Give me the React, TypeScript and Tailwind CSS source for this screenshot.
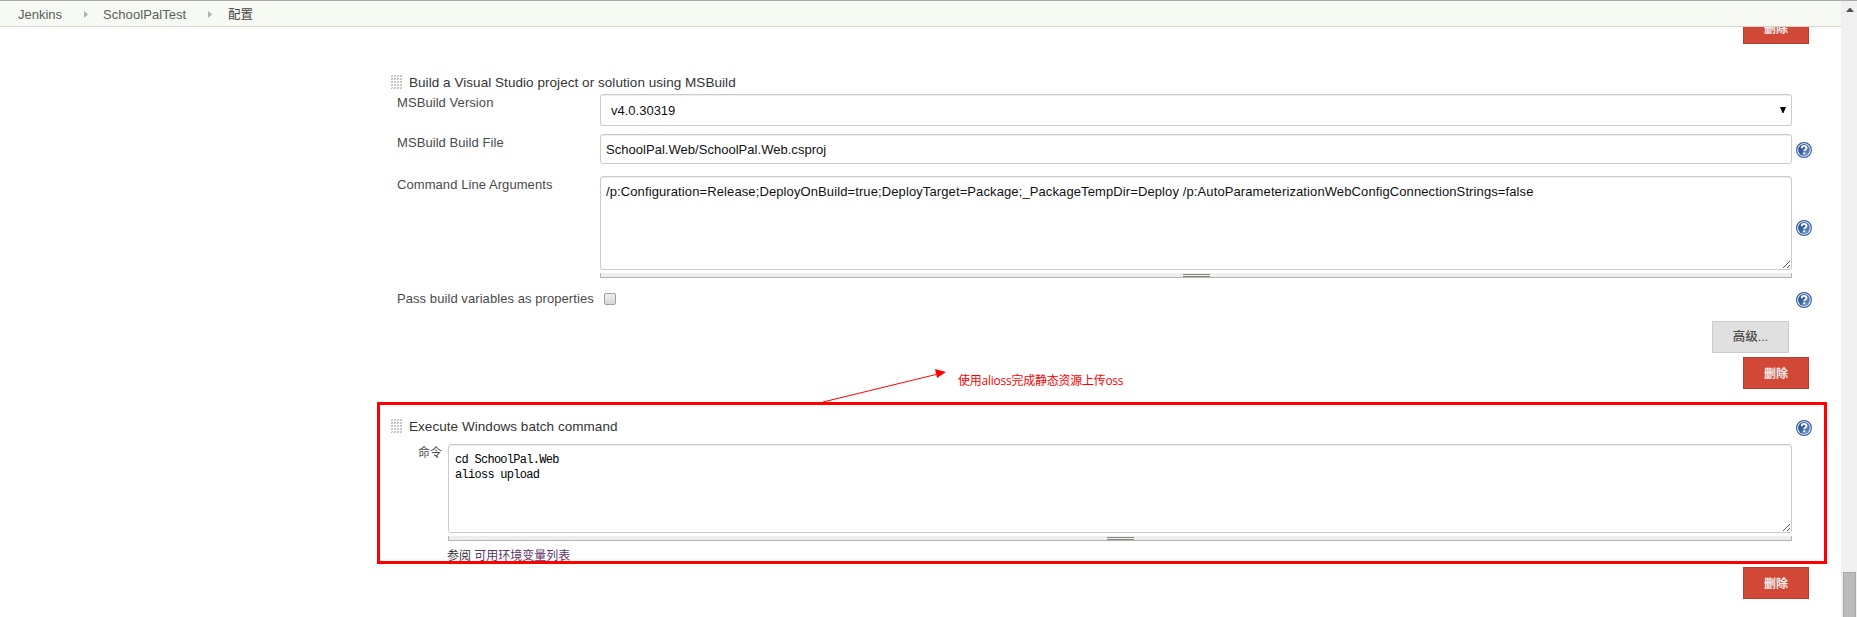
import React from "react";

const SANS = "font-['Liberation_Sans','Noto_Sans_CJK_SC',sans-serif]";

function HelpIcon() {
  return (
    <svg width="16" height="16" viewBox="0 0 16 16" className="block shrink-0">
      <defs>
        <linearGradient id="helpFill" x1="0" y1="0" x2="1" y2="1">
          <stop offset="0" stopColor="#1f4481" />
          <stop offset="0.5" stopColor="#3d66a6" />
          <stop offset="1" stopColor="#7ba3d6" />
        </linearGradient>
      </defs>
      <circle cx="8" cy="8" r="7.4" fill="#fff" stroke="#3a619f" strokeWidth="1.2" />
      <circle cx="8" cy="8" r="5.9" fill="url(#helpFill)" />
      <path d="M5.7 6.3C5.7 4.7 6.7 3.9 8.1 3.9c1.5 0 2.4.8 2.4 2 0 1.7-2.2 1.7-2.2 3.4" fill="none" stroke="#fff" strokeWidth="1.9" />
      <rect x="7.2" y="10.4" width="2.1" height="1.9" fill="#fff" />
    </svg>
  );
}

function Grip() {
  const cols = [0, 3, 6, 9];
  const rows = [0, 3, 6, 9, 12];
  return (
    <svg width="12" height="15" viewBox="0 0 12 15" className="block shrink-0" shapeRendering="crispEdges">
      {rows.map((y) =>
        cols.map((x) => (
          <g key={`${x}-${y}`}>
            <rect x={x} y={y} width="2" height="2" fill="#dedede" />
            <rect x={x + 1} y={y} width="1" height="1" fill="#b4b4b4" />
            <rect x={x} y={y + 1} width="1" height="1" fill="#b4b4b4" />
          </g>
        )),
      )}
    </svg>
  );
}

function Crumb() {
  return (
    <svg width="4" height="7" viewBox="0 0 4 7" className="mt-px block shrink-0">
      <path d="M0 0L4 3.5L0 7Z" fill="#b0b0b0" />
    </svg>
  );
}

function ResizeCorner() {
  return (
    <svg width="7" height="7" viewBox="0 0 7 7" className="absolute right-[1px] bottom-[1px]" shapeRendering="crispEdges">
      {[0, 1, 2, 3, 4, 5, 6].map((i) => (
        <rect key={i} x={i} y={6 - i} width="1" height="1" fill="#555" />
      ))}
      {[0, 1, 2].map((i) => (
        <rect key={i} x={4 + i} y={6 - i} width="1" height="1" fill="#555" />
      ))}
    </svg>
  );
}

function ResizeBar() {
  return (
    <div className="mt-[3px] flex h-[5px] justify-center border border-t-0 border-[#b4b4b0] bg-[#eee]">
      <div className="mt-px h-[3px] w-[27px] border-y border-[#888880]" />
    </div>
  );
}

function DeleteButton() {
  return (
    <button className="flex h-8 w-[66px] items-center justify-center border border-[#b73d2c] bg-[#d14836] pt-[2px] text-[12px] leading-[18px] font-bold text-[#f3eeee]">
      删除
    </button>
  );
}

const FIELD =
  "relative w-[1192px] rounded-[3px] border border-[#ccc] bg-white text-[13px] text-[#111] shadow-[inset_0_1px_1px_rgba(0,0,0,0.075)]";

function Label({ children }: { children: React.ReactNode }) {
  return <div className="w-[203px] shrink-0 pt-px tracking-[0.07px] whitespace-nowrap leading-[16px]">{children}</div>;
}

export default function App() {
  return (
    <div className={`${SANS} flex h-[617px] w-[1857px] flex-col overflow-hidden border-t border-[#a9a9a9] bg-white text-[13px] text-[#4a4a4a]`}>
      <div className="flex min-h-0 flex-1">
        <div className="flex min-w-0 flex-1 flex-col">
          <header className="flex h-[26px] shrink-0 items-center border-b border-[#d3d6cf] bg-[#f6faf2] pl-[18px] text-[#5a5f58]">
            <span className="w-[66px] pt-[2px]">Jenkins</span>
            <Crumb />
            <span className="ml-[15px] w-[105px] pt-[2px] tracking-[0.07px] whitespace-nowrap">SchoolPalTest</span>
            <Crumb />
            <span className="ml-[16px] pt-[3px] text-[12.5px] text-[#444]">配置</span>
          </header>

          <main className="relative flex h-[590px] flex-col overflow-hidden">
            <div className="-mt-[15px] flex h-8 shrink-0 justify-end pr-[32px]">
              <DeleteButton />
            </div>

            <section className="mt-[31px] pl-[391px]">
              <div className="flex h-[15px] items-center gap-[6px] text-[#333]">
                <Grip />
                <span className="text-[13.5px] leading-[15px] tracking-[0.05px] whitespace-nowrap">Build a Visual Studio project or solution using MSBuild</span>
              </div>

              <div className="mt-[4px] flex pl-[6px]">
                <Label>MSBuild Version</Label>
                <div className={`${FIELD} flex h-8 items-center justify-between pr-[5px] pl-[10px]`}>
                  <span className="pt-[2px]">v4.0.30319</span>
                  <svg width="6" height="6" viewBox="0 0 6 6" className="block">
                    <path d="M0 0H6L3.5 6H2.5Z" fill="#000" />
                  </svg>
                </div>
              </div>

              <div className="mt-[8px] flex pl-[6px]">
                <Label>MSBuild Build File</Label>
                <div className={`${FIELD} flex h-[30px] items-center pt-[2px] pl-[5px] tracking-[0.03px]`}>SchoolPal.Web/SchoolPal.Web.csproj</div>
                <div className="mt-[8px] ml-1">
                  <HelpIcon />
                </div>
              </div>

              <div className="mt-[12px] flex pl-[6px]">
                <Label>Command Line Arguments</Label>
                <div className="w-[1192px]">
                  <div className={`${FIELD} h-[94px] pt-[7px] pl-[5px] leading-[15px] tracking-[0.108px] whitespace-nowrap`}>
                    /p:Configuration=Release;DeployOnBuild=true;DeployTarget=Package;_PackageTempDir=Deploy /p:AutoParameterizationWebConfigConnectionStrings=false
                    <ResizeCorner />
                  </div>
                  <ResizeBar />
                </div>
                <div className="mt-[44px] ml-1">
                  <HelpIcon />
                </div>
              </div>

              <div className="mt-[14px] flex h-4 pl-[6px]">
                <div className="-mt-[2px]">
                  <Label>Pass build variables as properties</Label>
                </div>
                <div className="mt-px ml-1 h-3 w-3 rounded-[2px] border border-[#a0a0a0] bg-linear-to-b from-[#efefef] to-[#d8d8d8]" />
                <div className="ml-[1180px]">
                  <HelpIcon />
                </div>
              </div>
            </section>

            <div className="mt-[13px] flex shrink-0 justify-end pr-[52px]">
              <button className="flex h-8 w-[77px] items-center justify-center border border-[#ccc] bg-[#e0e0e0] pt-px text-[12.5px] font-medium">高级...</button>
            </div>
            <div className="mt-[4px] flex shrink-0 justify-end pr-[32px]">
              <DeleteButton />
            </div>

            <section className="mt-[30px] pl-[391px]">
              <div className="flex h-[15px] items-center text-[#333]">
                <Grip />
                <span className="ml-[6px] w-[1387px] text-[13.5px] leading-[15px] tracking-[0.05px] whitespace-nowrap">Execute Windows batch command</span>
                <div className="mt-[3px]">
                  <HelpIcon />
                </div>
              </div>
              <div className="mt-[10px] flex">
                <div className="w-[57px] pt-px pl-[27px] text-[12px] leading-[16px] whitespace-nowrap">命令</div>
                <div className="w-[1344px]">
                  <div className="relative h-[89px] rounded-[3px] border border-[#ccc] pt-[8px] pl-[6px] font-['Liberation_Mono','Noto_Sans_CJK_SC',monospace] text-[12px] leading-[15px] tracking-[-0.72px] whitespace-pre text-black shadow-[inset_0_1px_1px_rgba(0,0,0,0.075)]">
                    {"cd SchoolPal.Web\nalioss upload"}
                    <ResizeCorner />
                  </div>
                  <ResizeBar />
                  <div className="-ml-px mt-[7px] text-[12px] leading-[16px] text-[#333]">
                    参阅 <a className="text-[#5c3566]">可用环境变量列表</a>
                  </div>
                </div>
              </div>
            </section>

            <div className="mt-[3px] flex shrink-0 justify-end pr-[32px]">
              <DeleteButton />
            </div>

            <div className="absolute top-[375px] left-[377px] h-[162px] w-[1450px] border-[3px] border-[#f00]" />
            <svg width="126" height="36" viewBox="0 0 126 36" className="absolute top-[341px] left-[822px]">
              <path d="M1 34L114 6.5" stroke="#f00" strokeWidth="1" />
              <path d="M124 4L113 1L115 10Z" fill="#f00" />
            </svg>
            <div className="absolute top-[345px] left-[958px] font-['Open_Sans','Noto_Sans_CJK_SC',sans-serif] text-[12px] leading-[18px] tracking-[-0.25px] whitespace-nowrap text-[#f00]">使用alioss完成静态资源上传oss</div>
          </main>
        </div>

        <aside className="flex w-4 flex-col items-center justify-between bg-[#f0f0f0] pt-[7px]">
          <svg width="8" height="4" viewBox="0 0 8 4" className="mr-[-1px] block">
            <path d="M0 4L3.5 0H4.5L8 4Z" fill="#505050" />
          </svg>
          <div className="ml-[1px] h-[45px] w-[13px] border border-b-0 border-[#a8a8a8] bg-[#bbb]" />
        </aside>
      </div>
    </div>
  );
}
